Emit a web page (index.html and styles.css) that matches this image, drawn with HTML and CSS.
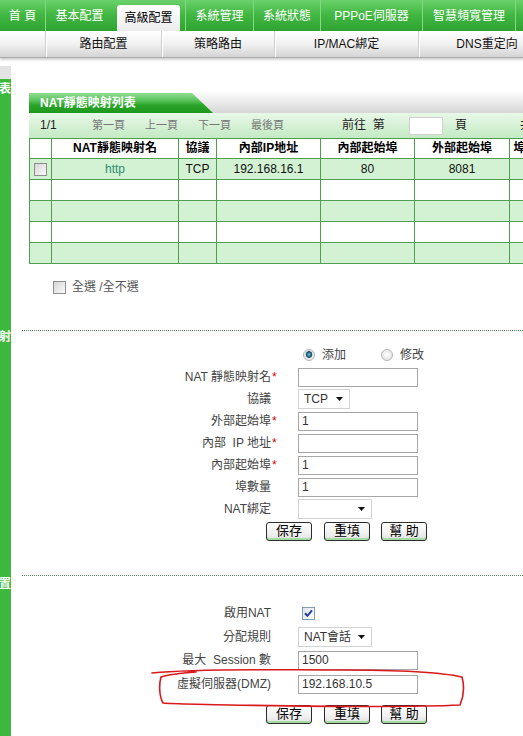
FILE: index.html
```html
<!DOCTYPE html>
<html lang="zh-Hant">
<head>
  <meta charset="UTF-8">
  <meta name="viewport" content="width=device-width, initial-scale=1.0">
  <title>高級配置 - NAT靜態映射</title>
  <link rel="stylesheet" href="styles.css">
</head>
<body>

  <div class="topnav">
    <a class="tab t-home">首&nbsp;頁</a>
    <a class="tab t-basic">基本配置</a>
    <a class="tab t-adv active">高級配置</a>
    <a class="tab t-sys">系統管理</a>
    <a class="tab t-stat">系統狀態</a>
    <a class="tab t-pppoe">PPPoE伺服器</a>
    <a class="tab t-qos">智慧頻寬管理</a>
    <a class="tab t-more"></a>
  </div>

  <div class="subnav">
    <span class="sub s-blank"></span>
    <a class="sub s-route">路由配置</a>
    <a class="sub s-policy">策略路由</a>
    <a class="sub s-bind">IP/MAC綁定</a>
    <a class="sub s-dns">DNS重定向</a>
  </div>

  <div class="gap"><span class="gap-block"></span></div>

  <!-- list -->
  <div class="sec sec-list">
    <div class="side"><b>表</b></div>
    <div class="main">
      <div class="titlebar"><span class="title-tab">NAT靜態映射列表</span></div>
      <div class="pager">
        <span class="pg-count">1/1</span>
        <a class="pg-link">第一頁</a>
        <a class="pg-link">上一頁</a>
        <a class="pg-link">下一頁</a>
        <a class="pg-link pg-last">最後頁</a>
        <span class="pg-goto">前往&nbsp;&nbsp;第</span>
        <input class="pg-input" type="text">
        <span class="pg-page">頁</span>
        <span class="pg-total">共</span>
      </div>
      <table class="list">
        <colgroup>
          <col class="c-cb"><col class="c-name"><col class="c-proto"><col class="c-ip">
          <col class="c-in"><col class="c-out"><col class="c-num"><col class="c-bind">
        </colgroup>
        <tr class="head">
          <th></th><th>NAT靜態映射名</th><th>協議</th><th>內部IP地址</th>
          <th>內部起始埠</th><th>外部起始埠</th><th>埠數量</th><th>NAT綁定</th>
        </tr>
        <tr class="odd">
          <td><span class="cb"></span></td><td class="name">http</td><td>TCP</td><td>192.168.16.1</td>
          <td>80</td><td>8081</td><td>1</td><td></td>
        </tr>
        <tr><td></td><td></td><td></td><td></td><td></td><td></td><td></td><td></td></tr>
        <tr class="odd"><td></td><td></td><td></td><td></td><td></td><td></td><td></td><td></td></tr>
        <tr><td></td><td></td><td></td><td></td><td></td><td></td><td></td><td></td></tr>
        <tr class="odd"><td></td><td></td><td></td><td></td><td></td><td></td><td></td><td></td></tr>
      </table>
      <label class="select-all"><span class="cb"></span>全選 /全不選</label>
    </div>
  </div>

  <!-- add / edit -->
  <div class="sec sec-edit">
    <div class="side"><b>射</b></div>
    <div class="main">
      <div class="divider"></div>
      <div class="form form-edit">
        <div class="lbl"></div>
        <div class="fld radios">
          <span class="radio checked"></span><span class="radio-text first">添加</span>
          <span class="radio"></span><span class="radio-text">修改</span>
        </div>

        <div class="lbl">NAT 靜態映射名<i class="req">*</i></div>
        <div class="fld"><input class="text" type="text"></div>

        <div class="lbl">協議</div>
        <div class="fld">
          <div class="select sel-proto"><span>TCP</span>
            <svg class="arrow" width="7" height="4" viewBox="0 0 7 4"><path d="M0 0h7L3.5 4z" fill="#111"/></svg>
          </div>
        </div>

        <div class="lbl">外部起始埠<i class="req">*</i></div>
        <div class="fld"><input class="text" type="text" value="1"></div>

        <div class="lbl">內部&nbsp; IP 地址<i class="req">*</i></div>
        <div class="fld"><input class="text" type="text"></div>

        <div class="lbl">內部起始埠<i class="req">*</i></div>
        <div class="fld"><input class="text" type="text" value="1"></div>

        <div class="lbl">埠數量</div>
        <div class="fld"><input class="text" type="text" value="1"></div>

        <div class="lbl">NAT綁定</div>
        <div class="fld">
          <div class="select sel-wide"><span></span>
            <svg class="arrow" width="7" height="4" viewBox="0 0 7 4"><path d="M0 0h7L3.5 4z" fill="#111"/></svg>
          </div>
        </div>
      </div>
      <div class="btns">
        <button class="btn">保存</button>
        <button class="btn">重填</button>
        <button class="btn">幫&nbsp;助</button>
      </div>
    </div>
  </div>

  <!-- global config -->
  <div class="sec sec-conf">
    <div class="side"><b>置</b></div>
    <div class="main">
      <div class="divider"></div>
      <div class="form form-conf">
        <div class="lbl">啟用NAT</div>
        <div class="fld">
          <span class="check">
            <svg width="13" height="13" viewBox="0 0 13 13"><path d="M3 6.2l2.4 2.6L10 3.4" fill="none" stroke="#22409a" stroke-width="2"/></svg>
          </span>
        </div>

        <div class="lbl">分配規則</div>
        <div class="fld">
          <div class="select sel-wide"><span>NAT會話</span>
            <svg class="arrow" width="7" height="4" viewBox="0 0 7 4"><path d="M0 0h7L3.5 4z" fill="#111"/></svg>
          </div>
        </div>

        <div class="lbl">最大&nbsp; Session 數</div>
        <div class="fld"><input class="text" type="text" value="1500"></div>

        <div class="lbl">虛擬伺服器(DMZ)</div>
        <div class="fld"><input class="text" type="text" value="192.168.10.5"></div>
      </div>
      <div class="btns">
        <button class="btn">保存</button>
        <button class="btn">重填</button>
        <button class="btn">幫&nbsp;助</button>
      </div>
    </div>
  </div>

  <!-- hand-drawn mark around the DMZ row -->
  <svg class="annot" width="523" height="736" viewBox="0 0 523 736">
    <path d="M152 673 C200 668 280 670 340 670 C400 670 440 672 462 677 C465 688 463 698 460 705 C400 708 300 706 230 705 C195 704 172 704 163 703 C159 696 159 684 161 677 C170 674 182 673 196 672"
          fill="none" stroke="#d9191c" stroke-width="1.6" stroke-linecap="round"/>
  </svg>

</body>
</html>
```

FILE: styles.css
```css
html, body {
  overflow: hidden;
}
body {
  margin: 0;
  width: 523px;
  height: 736px;
  position: relative;
  background: #fff;
  color: #333;
  font: 12px/1.2 "Liberation Sans", "Noto Sans CJK TC", sans-serif;
}
a { cursor: pointer; }

/* top menu */
.topnav {
  display: flex;
  height: 31px;
  white-space: nowrap;
  background: linear-gradient(#6ad16a, #44b844 45%, #2fa32f);
}
.tab {
  flex: none;
  display: flex;
  align-items: center;
  justify-content: center;
  padding-top: 2px;
  box-sizing: border-box;
  color: #fff;
  border-left: 1px solid #86d886;
}
.t-home { width: 45px; border-left: none; }
.t-basic { width: 68px; }
.t-adv { width: 63px; }
.t-sys { width: 68px; }
.t-stat { width: 67px; }
.t-pppoe { width: 102px; }
.t-qos { width: 93px; }
.t-more { width: 60px; }
.tab.active {
  margin: 5px 5px 0 4px;
  padding-top: 0;
  border-left: none;
  border-radius: 3px 3px 0 0;
  background: linear-gradient(#ffffff, #ececec);
  color: #000;
}

/* sub menu */
.subnav {
  display: flex;
  height: 26px;
  white-space: nowrap;
  background: linear-gradient(#ffffff, #f1f1f1 50%, #d4d4d4);
  border-bottom: 1px solid #aaa;
  box-shadow: 0 2px 2px rgba(0, 0, 0, 0.18);
}
.sub {
  flex: none;
  display: flex;
  align-items: center;
  justify-content: center;
  color: #111;
  border-left: 1px solid #cfcfcf;
  box-shadow: inset 1px 0 #fff;
}
.s-blank { width: 45px; border-left: none; box-shadow: none; }
.s-route { width: 115px; }
.s-policy { width: 112px; }
.s-bind { width: 143px; }
.s-dns { width: 136px; }

.gap {
  padding-top: 8px;
}
.gap-block {
  display: block;
  width: 11px;
  height: 13px;
  background: #e3e3e3;
}

/* sections with the green side strip */
.sec {
  display: flex;
}
.sec-list { height: 251px; }
.sec-edit { height: 245px; }
.sec-conf { height: 170px; }
.side {
  flex: none;
  width: 11px;
  display: flex;
  justify-content: flex-end;
  align-items: flex-start;
  overflow: hidden;
  background: #3cb93c;
}
.side b {
  flex: none;
  color: #fff;
  font-size: 12px;
  line-height: 14px;
}
.sec-list .side b { margin-top: 3px; }
.sec-conf .side b { margin-top: 2px; }
.main {
  flex: 1;
  min-width: 0;
}

/* list */
.sec-list .main {
  padding: 14px 0 0 18px;
}
.titlebar {
  display: flex;
  height: 20px;
  background: linear-gradient(#fafafa, #e9e9e9 50%, #d6d6d6);
}
.title-tab {
  width: 184px;
  padding-left: 11px;
  box-sizing: border-box;
  line-height: 20px;
  color: #fff;
  font-weight: bold;
  background: linear-gradient(#92dd92, #56c056 40%, #2aa52a 60%, #1c981c);
  clip-path: polygon(0 0, calc(100% - 21px) 0, 100% 100%, 0 100%);
}
.pager {
  display: flex;
  align-items: center;
  height: 25px;
  padding-left: 11px;
  white-space: nowrap;
  overflow: hidden;
  background: linear-gradient(#e8f8e8, #c4eac4);
}
.pager > * { flex: none; }
.pg-count { width: 52px; color: #222; }
.pg-link { width: 53px; color: #777; font-size: 11px; }
.pg-link.pg-last { width: 91px; }
.pg-goto { width: 67px; color: #222; }
.pg-input {
  width: 34px;
  height: 18px;
  box-sizing: border-box;
  margin: 0;
  border: 1px solid #d0d0d0;
  background: #fff;
}
.pg-page { width: 65px; margin-left: 12px; color: #222; }
.pg-total { color: #222; }

.list {
  table-layout: fixed;
  width: 594px;
  border-collapse: collapse;
  border: 1px solid #4e9f4e;
}
.list th, .list td {
  border: 1px solid #4e9f4e;
  padding: 0;
  text-align: center;
  white-space: nowrap;
  overflow: hidden;
}
.list th {
  height: 19px;
  color: #000;
  font-weight: bold;
}
.list td {
  height: 20px;
  color: #111;
}
.list tr.odd td { background: #d3f2d3; }
.list td.name { color: #2f8b72; }
.c-cb { width: 22px; }
.c-name { width: 127px; }
.c-proto { width: 38px; }
.c-ip { width: 104px; }
.c-in { width: 94px; }
.c-out { width: 95px; }
.c-num { width: 44px; }
.c-bind { width: 70px; }

.cb {
  display: inline-block;
  width: 11px;
  height: 11px;
  border: 1px solid #8e8e8e;
  background: linear-gradient(135deg, #d6d6d6, #fafafa);
  vertical-align: middle;
}
.list .cb { margin-top: -1px; }
.select-all {
  display: flex;
  align-items: center;
  height: 16px;
  margin: 15px 0 0 24px;
  color: #555;
  font-size: 12px;
}
.select-all .cb { margin-right: 6px; }

.divider {
  margin-left: 11px;
  border-top: 1px dotted #5f8a5f;
}

/* forms */
.form {
  display: grid;
  grid-template-columns: 269px 120px;
  column-gap: 18px;
  align-items: center;
}
.form-edit {
  padding-top: 13px;
  grid-auto-rows: 22px;
}
.form-conf {
  padding-top: 25px;
  grid-template-rows: 24px 24px 22px 26px;
}
.lbl {
  display: flex;
  justify-content: flex-end;
  padding-right: 9px;
  color: #444;
  white-space: nowrap;
}
.req {
  width: 9px;
  margin-right: -9px;
  padding-left: 1px;
  box-sizing: border-box;
  color: #d40000;
  font-style: normal;
}
.fld {
  display: flex;
  align-items: center;
  white-space: nowrap;
}
.fld > * { flex: none; }
.text {
  width: 120px;
  height: 19px;
  box-sizing: border-box;
  margin: 0;
  padding: 0 3px;
  border: 1px solid #a6a6a6;
  background: #fff;
  color: #333;
  font: 12px "Liberation Sans", "Noto Sans CJK TC", sans-serif;
}
.select {
  position: relative;
  display: flex;
  align-items: center;
  height: 20px;
  box-sizing: border-box;
  padding-left: 5px;
  border: 1px solid #d2d2d2;
  background: #fff;
  color: #333;
}
.sel-proto { width: 52px; }
.sel-wide { width: 74px; }
.select .arrow {
  position: absolute;
  right: 6px;
  top: 7px;
}

.radios { padding-left: 5px; }
.radio {
  width: 12px;
  height: 12px;
  box-sizing: border-box;
  border-radius: 50%;
  border: 1px solid #b4b4b4;
  background: radial-gradient(circle at 50% 45%, #ffffff, #dadada);
}
.radio.checked {
  background: radial-gradient(circle at 50% 45%, #8cc6da 0, #226c8b 2px, #174f6a 3px, #e2e2e2 3.6px, #f6f6f6);
}
.radio-text {
  margin-left: 7px;
  color: #444;
}
.radio-text.first { width: 59px; }

.check {
  display: block;
  width: 13px;
  height: 13px;
  box-sizing: border-box;
  margin-left: 4px;
  border: 1px solid #7f9db9;
  background: linear-gradient(135deg, #dfe3ea, #ffffff);
}
.check svg { display: block; margin: -1px 0 0 -1px; }

.btns {
  display: flex;
  align-items: center;
  height: 22px;
  margin-left: 255px;
}
.sec-conf .btns { margin-top: 6px; }
.btn {
  width: 46px;
  height: 19px;
  margin-right: 11px;
  padding: 0;
  border: 1px solid #2c2c2c;
  border-radius: 3px;
  background: linear-gradient(#ffffff, #f0f0f0 60%, #e2e2e2);
  box-shadow: inset 0 -2px 0 #a3dca3;
  color: #000;
  font: 13px/16px "Liberation Sans", "Noto Sans CJK TC", sans-serif;
  cursor: pointer;
}
.btn:first-child { margin-right: 12px; }

/* red pen mark */
.annot {
  position: absolute;
  left: 0;
  top: 0;
  pointer-events: none;
}
```
